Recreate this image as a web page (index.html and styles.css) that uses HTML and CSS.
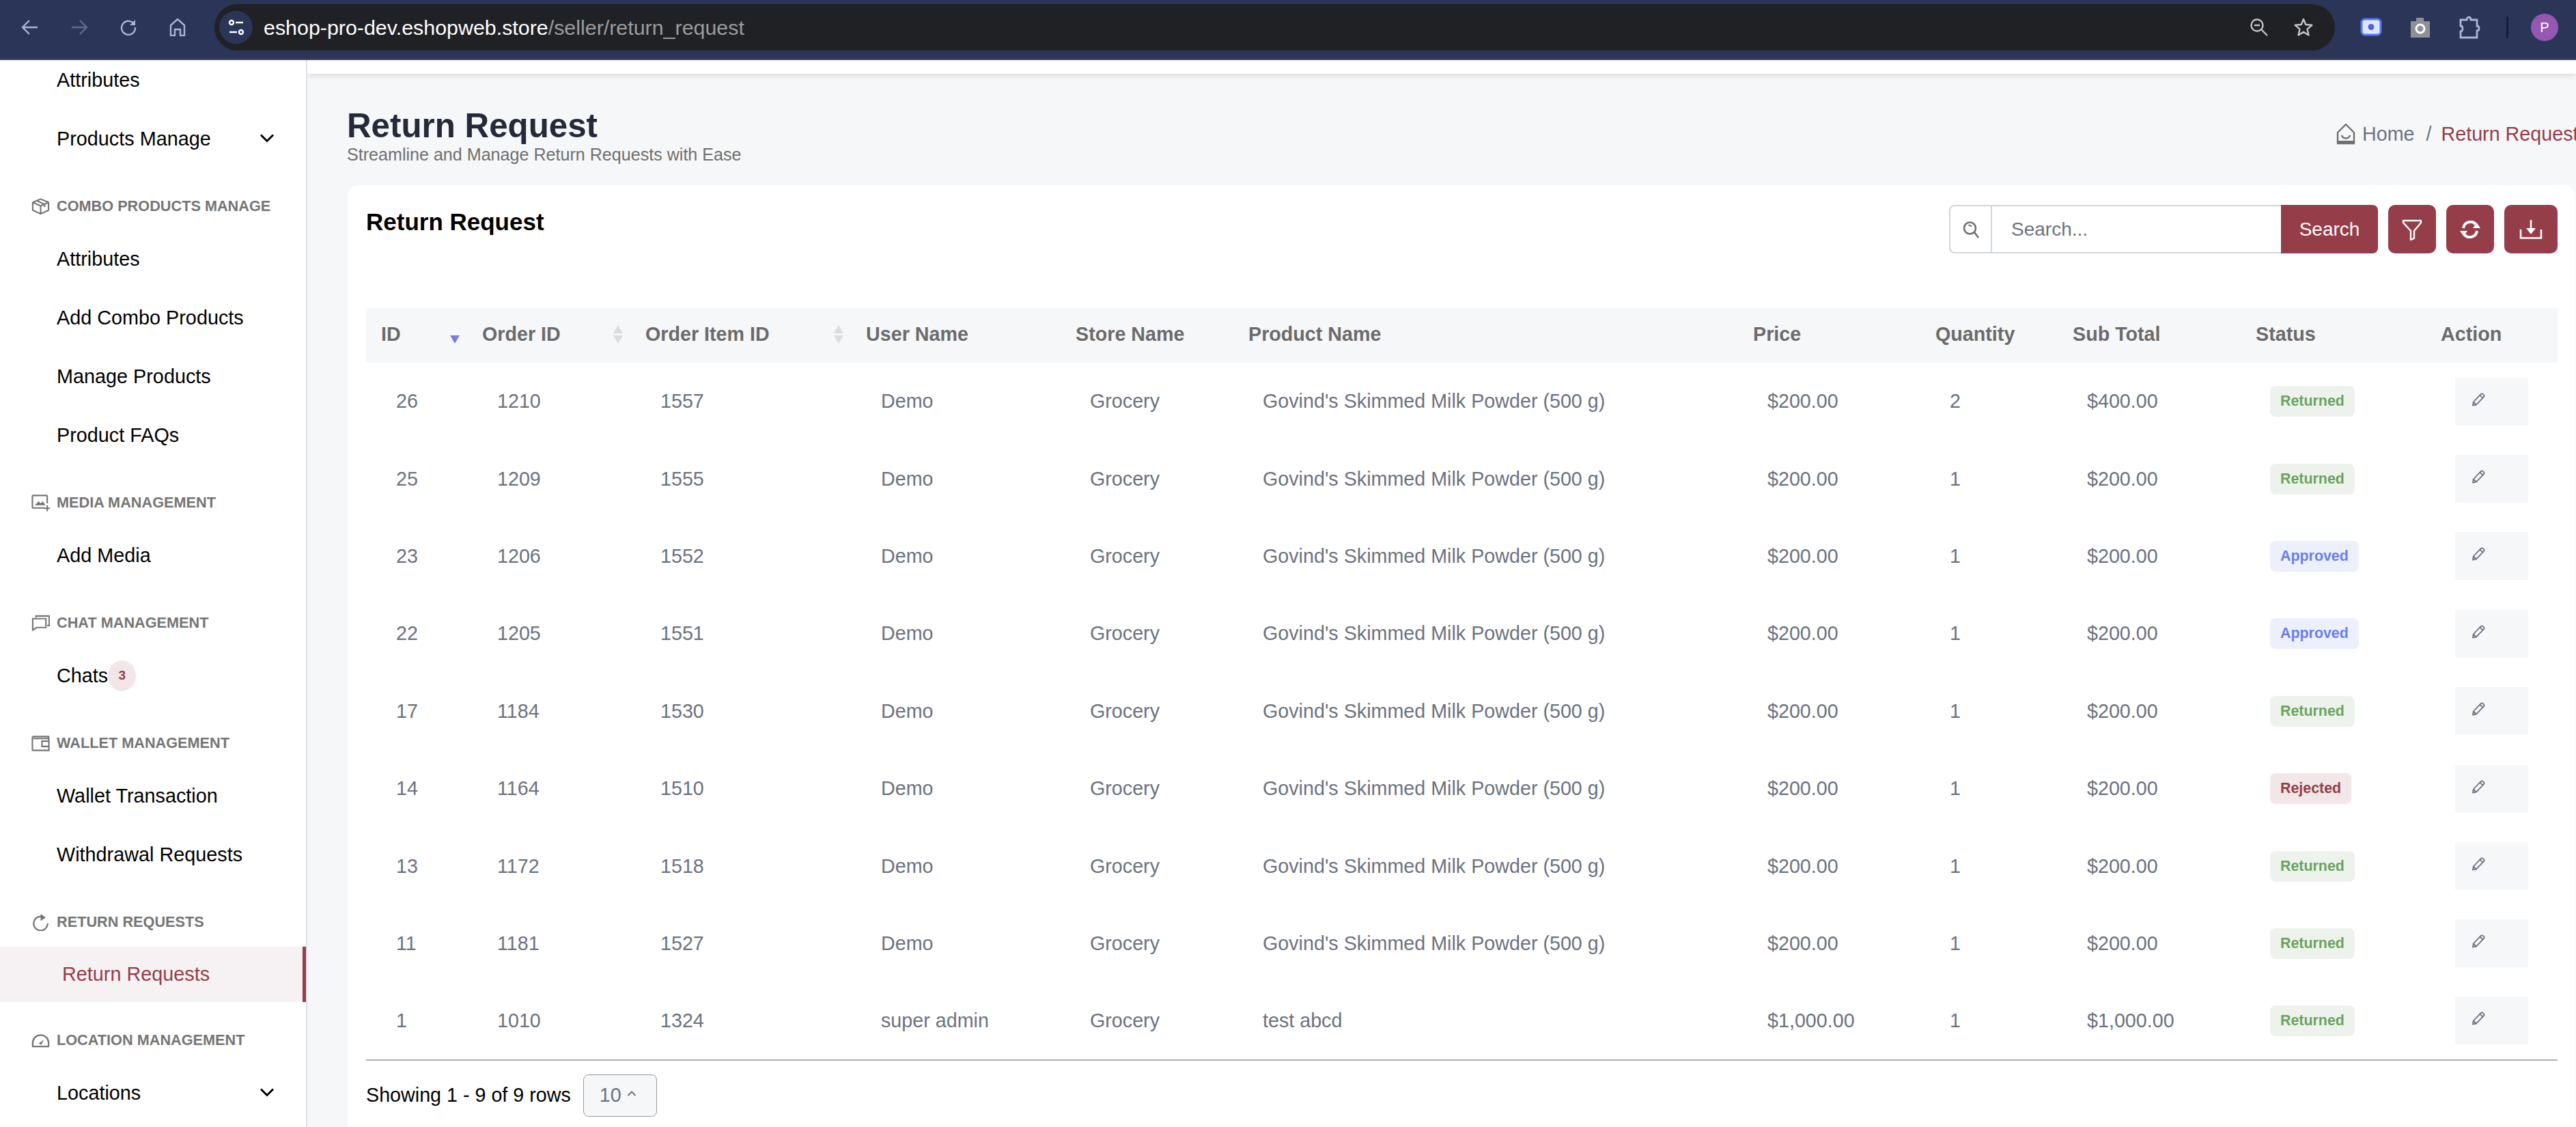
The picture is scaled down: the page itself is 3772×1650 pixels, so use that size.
FILE: index.html
```html
<!DOCTYPE html>
<html lang="en">
<head>
    <meta charset="UTF-8">
    <title>Return Request</title>
    <link rel="stylesheet" href="styles.css">
</head>
<body>
    <svg class="sprite" aria-hidden="true">
        <symbol id="pencil" viewBox="0 0 20 20"><path d="M2 18.5l.8-5L13.6 2.2c1-1 2.3-1 3.2-.1l1 1c.9.9.9 2.2-.1 3.2L6.9 17.6z M2.8 13.5l4.1 4.1 M12.4 3.6l4.1 4.1" fill="none" stroke="currentColor" stroke-width="1.8" stroke-linejoin="round"/></symbol>
        <symbol id="chevron" viewBox="0 0 22 14"><path d="M2 2.5l9 9 9-9" fill="none" stroke="currentColor" stroke-width="3"/></symbol>
    </svg>

    <!-- Browser toolbar -->
    <header class="browser-bar">
        <div class="nav-icons">
            <svg class="nav-icon" viewBox="0 0 26 26"><path d="M24 13H4M12 3l-10 10 10 10" fill="none" stroke="currentColor" stroke-width="2.400"/></svg>
            <svg class="nav-icon dim" viewBox="0 0 26 26"><path d="M2 13h20M14 3l10 10-10 10" fill="none" stroke="currentColor" stroke-width="2.400"/></svg>
            <svg class="nav-icon" viewBox="0 0 26 26"><path d="M21.500 8.500A10 10 0 1 0 23 13" fill="none" stroke="currentColor" stroke-width="2.400"/><path d="M23 2v8h-8z" fill="currentColor"/></svg>
            <svg class="nav-icon" viewBox="0 0 26 26"><path d="M3 25V10L13 1l10 9v15h-6v-9H9v9z" fill="none" stroke="currentColor" stroke-width="2.400"/></svg>
        </div>
        <div class="address-bar">
            <span class="site-info">
                <svg width="26" height="24" viewBox="0 0 26 24"><g fill="none" stroke="#fff" stroke-width="2.400"><circle cx="6" cy="5" r="3"/><path d="M12 5h11M3 19h11"/><circle cx="20" cy="19" r="3"/></g></svg>
            </span>
            <span class="url"><span class="url-host">eshop-pro-dev.eshopweb.store</span>/seller/return_request</span>
            <svg class="bar-icon" viewBox="0 0 28 28"><g fill="none" stroke="#c4c7c5" stroke-width="2.400"><circle cx="11" cy="11" r="8.500"/><path d="M7 11h8M17 17l9 9"/></g></svg>
            <svg class="bar-icon star" viewBox="0 0 28 28"><path d="M14 2l3.300 8 9 .8-6.800 5.800 2 8.800-7.500-4.600-7.500 4.600 2-8.800-6.800-5.800 9-.8z" fill="none" stroke="#c4c7c5" stroke-width="2.400" stroke-linejoin="round"/></svg>
        </div>
        <div class="ext-icons">
            <svg class="ext-icon" viewBox="0 0 32 34"><rect x="2" y="5" width="28" height="23" rx="5" fill="#dfe6fb" stroke="#4f79f5" stroke-width="3"/><circle cx="16" cy="16.500" r="4.500" fill="#5560d8"/></svg>
            <svg class="ext-icon" viewBox="0 0 32 34"><path d="M2 8h8V3h11v5h9v24H2z" fill="#8d9097"/><circle cx="16" cy="19" r="6" fill="none" stroke="#fff" stroke-width="3"/></svg>
            <svg class="ext-icon" viewBox="0 0 32 34"><path d="M3 6h9c0-5 6-5 6 0h9v9c4 0 4 7 0 7v10H3V23c4 0 4-8 0-8z" fill="none" stroke="#a9b6d8" stroke-width="2.800"/></svg>
            <span class="ext-divider"></span>
            <span class="avatar">P</span>
        </div>
    </header>

    <div class="app">
        <!-- Sidebar -->
        <nav class="sidebar">
            <div class="sidebar-scroll">
                <a class="side-item">Attributes</a>
                <a class="side-item">Products Manage<svg class="chevron"><use href="#chevron"/></svg></a>

                <div class="side-heading">
                    <svg class="side-icon" viewBox="0 0 28 26"><path d="M14 2l12 5v12l-12 5.500L2 19V7zM2 7l12 5.500L26 7M14 12.500V24.500M8 4.500l12 5.500v4" fill="none" stroke="currentColor" stroke-width="2.200" stroke-linejoin="round"/></svg>
                    Combo Products Manage
                </div>
                <a class="side-item">Attributes</a>
                <a class="side-item">Add Combo Products</a>
                <a class="side-item">Manage Products</a>
                <a class="side-item">Product FAQs</a>

                <div class="side-heading">
                    <svg class="side-icon" viewBox="0 0 28 26"><path d="M21 21H3a1.500 1.500 0 0 1-1.500-1.500v-16A1.500 1.500 0 0 1 3 2h19.500A1.500 1.500 0 0 1 24 3.500V14" fill="none" stroke="currentColor" stroke-width="2.200"/><path d="M5 17l6-6 3 3 3-3 4 5v1z" fill="currentColor"/><path d="M24 17v9M19.500 21.500h8.500" stroke="currentColor" stroke-width="2.200"/></svg>
                    Media Management
                </div>
                <a class="side-item">Add Media</a>

                <div class="side-heading">
                    <svg class="side-icon" viewBox="0 0 28 26"><path d="M7 5V2.500h20V17h-3" fill="none" stroke="currentColor" stroke-width="2.200"/><path d="M2 6.500h20V20H8l-6 4z" fill="none" stroke="currentColor" stroke-width="2.200" stroke-linejoin="round"/></svg>
                    Chat Management
                </div>
                <a class="side-item">Chats<span class="count-badge">3</span></a>

                <div class="side-heading">
                    <svg class="side-icon" viewBox="0 0 28 26"><path d="M26 6V3H3a1.500 1.500 0 0 0-1.500 1.500v18A1.500 1.500 0 0 0 3 24h23.500V6H3" fill="none" stroke="currentColor" stroke-width="2.200"/><path d="M26 10H16v8h10" fill="none" stroke="currentColor" stroke-width="2.200"/></svg>
                    Wallet Management
                </div>
                <a class="side-item">Wallet Transaction</a>
                <a class="side-item">Withdrawal Requests</a>

                <div class="side-heading">
                    <svg class="side-icon" viewBox="0 0 28 28"><path d="M20 7a11 11 0 1 0 5 9" fill="none" stroke="currentColor" stroke-width="2.400"/><path d="M14 1l8 6-8 5z" fill="currentColor"/></svg>
                    Return Requests
                </div>
                <a class="side-item active">Return Requests</a>

                <div class="side-heading">
                    <svg class="side-icon" viewBox="0 0 28 22"><path d="M2 21v-6a12 12 0 0 1 24 0v6M1 20.500h26" fill="none" stroke="currentColor" stroke-width="2.400"/><path d="M11 16l8-6-4 8z" fill="currentColor"/></svg>
                    Location Management
                </div>
                <a class="side-item">Locations<svg class="chevron"><use href="#chevron"/></svg></a>
            </div>
        </nav>

        <main class="main">
            <div class="topbar"></div>

            <div class="page-head">
                <div>
                    <h1>Return Request</h1>
                    <p class="page-sub">Streamline and Manage Return Requests with Ease</p>
                </div>
                <div class="breadcrumb">
                    <svg class="home-icon" viewBox="0 0 30 32"><path d="M15 2L3 14v16h24V14zM9 18c1.500 6 10.500 6 12 0" fill="none" stroke="#6f6f6f" stroke-width="2.400" stroke-linejoin="round"/><path d="M3 26v4h24v-4z" fill="#6f6f6f"/></svg>
                    <span>Home</span>
                    <span class="crumb-sep">/</span>
                    <span class="crumb-current">Return Request</span>
                </div>
            </div>

            <section class="card">
                <div class="card-top">
                    <h2>Return Request</h2>
                    <div class="tools">
                        <div class="search-group">
                            <span class="search-addon">
                                <svg width="26" height="26" viewBox="0 0 26 26"><g fill="none" stroke="#6f6f6f" stroke-width="2.600"><circle cx="11.500" cy="11" r="8.500"/><path d="M18 17l6 8"/><path d="M9 7c2-1 4 0 5 2" stroke-width="1.800"/></g></svg>
                            </span>
                            <span class="search-input">Search...</span>
                            <button class="search-btn">Search</button>
                        </div>
                        <button class="tool-btn">
                            <svg width="30" height="32" viewBox="0 0 30 32"><path d="M2 3h26v3L18 18v11l-5 2V18L2 6z" fill="none" stroke="#fff" stroke-width="2.400" stroke-linejoin="round"/></svg>
                        </button>
                        <button class="tool-btn">
                            <svg width="32" height="26" viewBox="0 0 32 26"><g fill="none" stroke="#fff" stroke-width="4"><path d="M6 11a10.500 10.500 0 0 1 18-6"/><path d="M26 15a10.500 10.500 0 0 1-18 6"/></g><path d="M31 11H20l5.500-8zM1 15h11l-5.500 8z" fill="#fff"/></svg>
                        </button>
                        <button class="tool-btn wide">
                            <svg width="34" height="28" viewBox="0 0 34 28"><g fill="none" stroke="#fff" stroke-width="2.600"><path d="M2 14v12.500h30V14"/><path d="M17 0v16"/></g><path d="M10 12h14l-7 9z" fill="#fff"/></svg>
                        </button>
                    </div>
                </div>

                <table class="data-table">
                    <colgroup>
                        <col class="c-id"><col class="c-order"><col class="c-item"><col class="c-user"><col class="c-store"><col class="c-product"><col class="c-price"><col class="c-qty"><col class="c-sub"><col class="c-status"><col>
                    </colgroup>
                    <thead>
                        <tr>
                            <th class="sortable sort-desc">ID</th>
                            <th class="sortable">Order ID</th>
                            <th class="sortable">Order Item ID</th>
                            <th>User Name</th>
                            <th>Store Name</th>
                            <th>Product Name</th>
                            <th>Price</th>
                            <th>Quantity</th>
                            <th>Sub Total</th>
                            <th>Status</th>
                            <th>Action</th>
                        </tr>
                    </thead>
                    <tbody>
                        <tr><td>26</td><td>1210</td><td>1557</td><td>Demo</td><td>Grocery</td><td>Govind's Skimmed Milk Powder (500 g)</td><td>$200.00</td><td>2</td><td>$400.00</td><td><span class="badge returned">Returned</span></td><td><a class="edit-btn"><svg class="pencil"><use href="#pencil"/></svg></a></td></tr>
                        <tr><td>25</td><td>1209</td><td>1555</td><td>Demo</td><td>Grocery</td><td>Govind's Skimmed Milk Powder (500 g)</td><td>$200.00</td><td>1</td><td>$200.00</td><td><span class="badge returned">Returned</span></td><td><a class="edit-btn"><svg class="pencil"><use href="#pencil"/></svg></a></td></tr>
                        <tr><td>23</td><td>1206</td><td>1552</td><td>Demo</td><td>Grocery</td><td>Govind's Skimmed Milk Powder (500 g)</td><td>$200.00</td><td>1</td><td>$200.00</td><td><span class="badge approved">Approved</span></td><td><a class="edit-btn"><svg class="pencil"><use href="#pencil"/></svg></a></td></tr>
                        <tr><td>22</td><td>1205</td><td>1551</td><td>Demo</td><td>Grocery</td><td>Govind's Skimmed Milk Powder (500 g)</td><td>$200.00</td><td>1</td><td>$200.00</td><td><span class="badge approved">Approved</span></td><td><a class="edit-btn"><svg class="pencil"><use href="#pencil"/></svg></a></td></tr>
                        <tr><td>17</td><td>1184</td><td>1530</td><td>Demo</td><td>Grocery</td><td>Govind's Skimmed Milk Powder (500 g)</td><td>$200.00</td><td>1</td><td>$200.00</td><td><span class="badge returned">Returned</span></td><td><a class="edit-btn"><svg class="pencil"><use href="#pencil"/></svg></a></td></tr>
                        <tr><td>14</td><td>1164</td><td>1510</td><td>Demo</td><td>Grocery</td><td>Govind's Skimmed Milk Powder (500 g)</td><td>$200.00</td><td>1</td><td>$200.00</td><td><span class="badge rejected">Rejected</span></td><td><a class="edit-btn"><svg class="pencil"><use href="#pencil"/></svg></a></td></tr>
                        <tr><td>13</td><td>1172</td><td>1518</td><td>Demo</td><td>Grocery</td><td>Govind's Skimmed Milk Powder (500 g)</td><td>$200.00</td><td>1</td><td>$200.00</td><td><span class="badge returned">Returned</span></td><td><a class="edit-btn"><svg class="pencil"><use href="#pencil"/></svg></a></td></tr>
                        <tr><td>11</td><td>1181</td><td>1527</td><td>Demo</td><td>Grocery</td><td>Govind's Skimmed Milk Powder (500 g)</td><td>$200.00</td><td>1</td><td>$200.00</td><td><span class="badge returned">Returned</span></td><td><a class="edit-btn"><svg class="pencil"><use href="#pencil"/></svg></a></td></tr>
                        <tr><td>1</td><td>1010</td><td>1324</td><td>super admin</td><td>Grocery</td><td>test abcd</td><td>$1,000.00</td><td>1</td><td>$1,000.00</td><td><span class="badge returned">Returned</span></td><td><a class="edit-btn"><svg class="pencil"><use href="#pencil"/></svg></a></td></tr>
                    </tbody>
                </table>

                <div class="table-foot">
                    <span>Showing 1 - 9 of 9 rows</span>
                    <span class="page-size">10<svg class="caret" viewBox="0 0 14 10"><path d="M1.500 8L7 2.500 12.500 8" fill="none" stroke="currentColor" stroke-width="2"/></svg></span>
                </div>
            </section>
        </main>
    </div>
</body>
</html>
```

FILE: styles.css
```css
:root {
    --primary-color: #953d48;
    --bar-color: #2a3558;
    --page-bg: #f6f7f9;
    --muted: #6b7280;
}

* {
    box-sizing: border-box;
    margin: 0;
    padding: 0;
}

html, body {
    width: 3772px;
    height: 1650px;
    overflow: hidden;
}

body {
    font-family: 'Liberation Sans', Arial, sans-serif;
    background: white;
    color: black;
}

.sprite {
    display: none;
}

/* Browser toolbar */
.browser-bar {
    height: 88px;
    background: var(--bar-color);
    border-bottom: 2px solid #3b4568;
    display: flex;
    align-items: flex-start;
}

.nav-icons {
    width: 314px;
    height: 80px;
    display: flex;
    align-items: center;
    gap: 46px;
    padding-left: 31px;
    color: #a9b6d8;
}

.nav-icon {
    width: 26px;
    height: 26px;
}

.nav-icon.dim {
    color: #5f6c92;
}

.address-bar {
    width: 3105px;
    height: 68px;
    margin-top: 6px;
    background: #202124;
    border-radius: 34px;
    display: flex;
    align-items: center;
    padding: 0 32px 0 7px;
}

.site-info {
    width: 49px;
    height: 48px;
    border-radius: 24px;
    background: var(--bar-color);
    display: flex;
    align-items: center;
    justify-content: center;
    margin-right: 16px;
}

.url {
    flex: 1;
    font-size: 30.4px;
    color: #9a9c9f;
    white-space: nowrap;
}

.url-host {
    color: white;
}

.bar-icon {
    width: 28px;
    height: 28px;
}

.bar-icon.star {
    margin-left: 37px;
}

.ext-icons {
    flex: 1;
    height: 80px;
    display: flex;
    align-items: center;
    padding-left: 37px;
}

.ext-icon {
    width: 32px;
    height: 34px;
    margin-right: 40px;
}

.ext-divider {
    width: 3px;
    height: 32px;
    background: #161c36;
    border-radius: 2px;
    margin-left: -2px;
    margin-right: 33px;
}

.avatar {
    width: 40px;
    height: 40px;
    border-radius: 50%;
    background: #9558b2;
    color: white;
    font-size: 20px;
    display: flex;
    align-items: center;
    justify-content: center;
}

/* App shell */
.app {
    display: flex;
    height: 1562px;
}

.sidebar {
    width: 450px;
    flex-shrink: 0;
    border-right: 2px solid #dfe1e6;
    overflow: hidden;
}

/* the sidebar is scrolled a little in the shot */
.sidebar-scroll {
    margin-top: -14px;
}

.side-item {
    height: 86px;
    display: flex;
    align-items: center;
    padding: 0 46px 0 83px;
    font-size: 28.8px;
    color: black;
}

.side-item.active {
    height: 81px;
    margin: 2px 0 7px;
    padding-left: 91px;
    color: var(--primary-color);
    background: #f6f2f4;
    border-right: 5px solid var(--primary-color);
}

.side-heading {
    height: 68px;
    margin-top: 22px;
    display: flex;
    align-items: center;
    gap: 10px;
    padding-left: 46px;
    font-size: 21.7px;
    font-weight: bold;
    text-transform: uppercase;
    color: #757575;
}

.side-icon {
    width: 27px;
    height: 26px;
}

.chevron {
    width: 22px;
    height: 14px;
    margin-left: auto;
    margin-top: -3px;
}

.count-badge {
    width: 41px;
    height: 45px;
    border-radius: 50%;
    background: #f2e6e8;
    color: var(--primary-color);
    font-size: 19px;
    font-weight: bold;
    display: flex;
    align-items: center;
    justify-content: center;
}

/* Main area */
.main {
    flex: 1;
    min-width: 0;
    background: var(--page-bg);
    overflow: hidden;
}

.topbar {
    height: 20px;
    background: white;
    box-shadow: 0 3px 8px rgba(0,0,0,0.12);
}

.page-head {
    height: 163px;
    display: flex;
    justify-content: space-between;
    padding: 47px 0 0 58px;
    white-space: nowrap;
}

.page-head h1 {
    font-size: 49.3px;
    line-height: 58px;
    color: #252a3a;
}

.page-sub {
    font-size: 25.1px;
    line-height: 28px;
    margin-top: -1px;
    color: #6f6f6f;
}

.breadcrumb {
    width: 352px;
    height: 32px;
    margin-top: 25px;
    display: flex;
    align-items: center;
    font-size: 28.7px;
    color: var(--muted);
}

.home-icon {
    width: 30px;
    height: 32px;
    flex-shrink: 0;
    margin-right: 9px;
}

.crumb-sep {
    margin: 0 14px 0 17px;
}

.crumb-current {
    color: var(--primary-color);
}

/* Card */
.card {
    margin-left: 59px;
    margin-right: 1px;
    height: 1400px;
    background: white;
    border-radius: 16px 16px 0 0;
    padding: 29px 26px 0 27px;
}

.card-top {
    height: 151px;
    display: flex;
    justify-content: space-between;
    align-items: flex-start;
}

.card-top h2 {
    font-size: 35px;
    line-height: 50px;
}

.tools {
    display: flex;
    gap: 15px;
}

.search-group {
    width: 628px;
    height: 71px;
    display: flex;
    border: 2px solid #d0d4dc;
    border-radius: 8px;
    font-size: 28px;
}

.search-addon {
    width: 61px;
    display: flex;
    align-items: center;
    justify-content: center;
    border-right: 2px solid #d0d4dc;
}

.search-input {
    flex: 1;
    padding-left: 28px;
    display: flex;
    align-items: center;
    color: var(--muted);
}

.search-btn {
    width: 142px;
    margin: -2px -2px -2px 0;
    border: none;
    border-radius: 0 8px 8px 0;
    background: var(--primary-color);
    color: white;
    font: inherit;
}

.tool-btn {
    width: 70px;
    height: 71px;
    border: none;
    border-radius: 10px;
    background: var(--primary-color);
    display: flex;
    align-items: center;
    justify-content: center;
}

.tool-btn.wide {
    width: 78px;
}

/* Table */
.data-table {
    width: 100%;
    table-layout: fixed;
    border-collapse: collapse;
    font-size: 28.7px;
}

.c-id { width: 148px; }
.c-order { width: 239px; }
.c-item { width: 323px; }
.c-user { width: 307px; }
.c-store { width: 253px; }
.c-product { width: 739px; }
.c-price { width: 267px; }
.c-qty { width: 201px; }
.c-sub { width: 268px; }
.c-status { width: 271px; }

.data-table thead tr {
    height: 80px;
    background: var(--page-bg);
}

.data-table th {
    text-align: left;
    padding: 0 0 3px 22px;
    font-size: 28.7px;
    color: #6b6b6b;
    position: relative;
    white-space: nowrap;
}

.sortable::before,
.sortable::after {
    content: '';
    position: absolute;
    right: 11px;
    border-left: 7px solid transparent;
    border-right: 7px solid transparent;
}

.sortable::before {
    top: 25px;
    border-bottom: 12px solid #dcdcdc;
}

.sortable::after {
    top: 40px;
    border-top: 12px solid #dcdcdc;
}

.sort-desc::before {
    display: none;
}

.sort-desc::after {
    border-top-color: #7b7be0;
}

.data-table tbody tr {
    height: 113.4px;
}

.data-table td {
    padding-left: 44px;
    color: var(--muted);
    white-space: nowrap;
}

.data-table td:nth-child(n+5) {
    padding-left: 43px;
}

.data-table tbody tr:last-child {
    border-bottom: 2px solid #b0b0b0;
}

.badge {
    display: inline-block;
    height: 45px;
    line-height: 45px;
    padding: 0 15px;
    border-radius: 8px;
    font-size: 21.4px;
    font-weight: bold;
}

.returned {
    color: #6aa35e;
    background: #edf3ec;
}

.approved {
    color: #6a7fe8;
    background: #ecf0fc;
}

.rejected {
    color: var(--primary-color);
    background: #f2e6e8;
}

.edit-btn {
    width: 107px;
    height: 70px;
    background: var(--page-bg);
    display: flex;
    align-items: center;
    padding-left: 24px;
}

.pencil {
    width: 20px;
    height: 20px;
    margin-top: -6px;
}

.table-foot {
    display: flex;
    align-items: center;
    gap: 18px;
    margin-top: 20px;
    font-size: 28.7px;
}

.page-size {
    width: 108px;
    height: 62px;
    padding-left: 23px;
    border: 1.5px solid #999;
    border-radius: 8px;
    background: var(--page-bg);
    color: var(--muted);
    display: flex;
    align-items: center;
}

.caret {
    width: 14px;
    height: 10px;
    margin-left: 8px;
    margin-top: -6px;
}
```
